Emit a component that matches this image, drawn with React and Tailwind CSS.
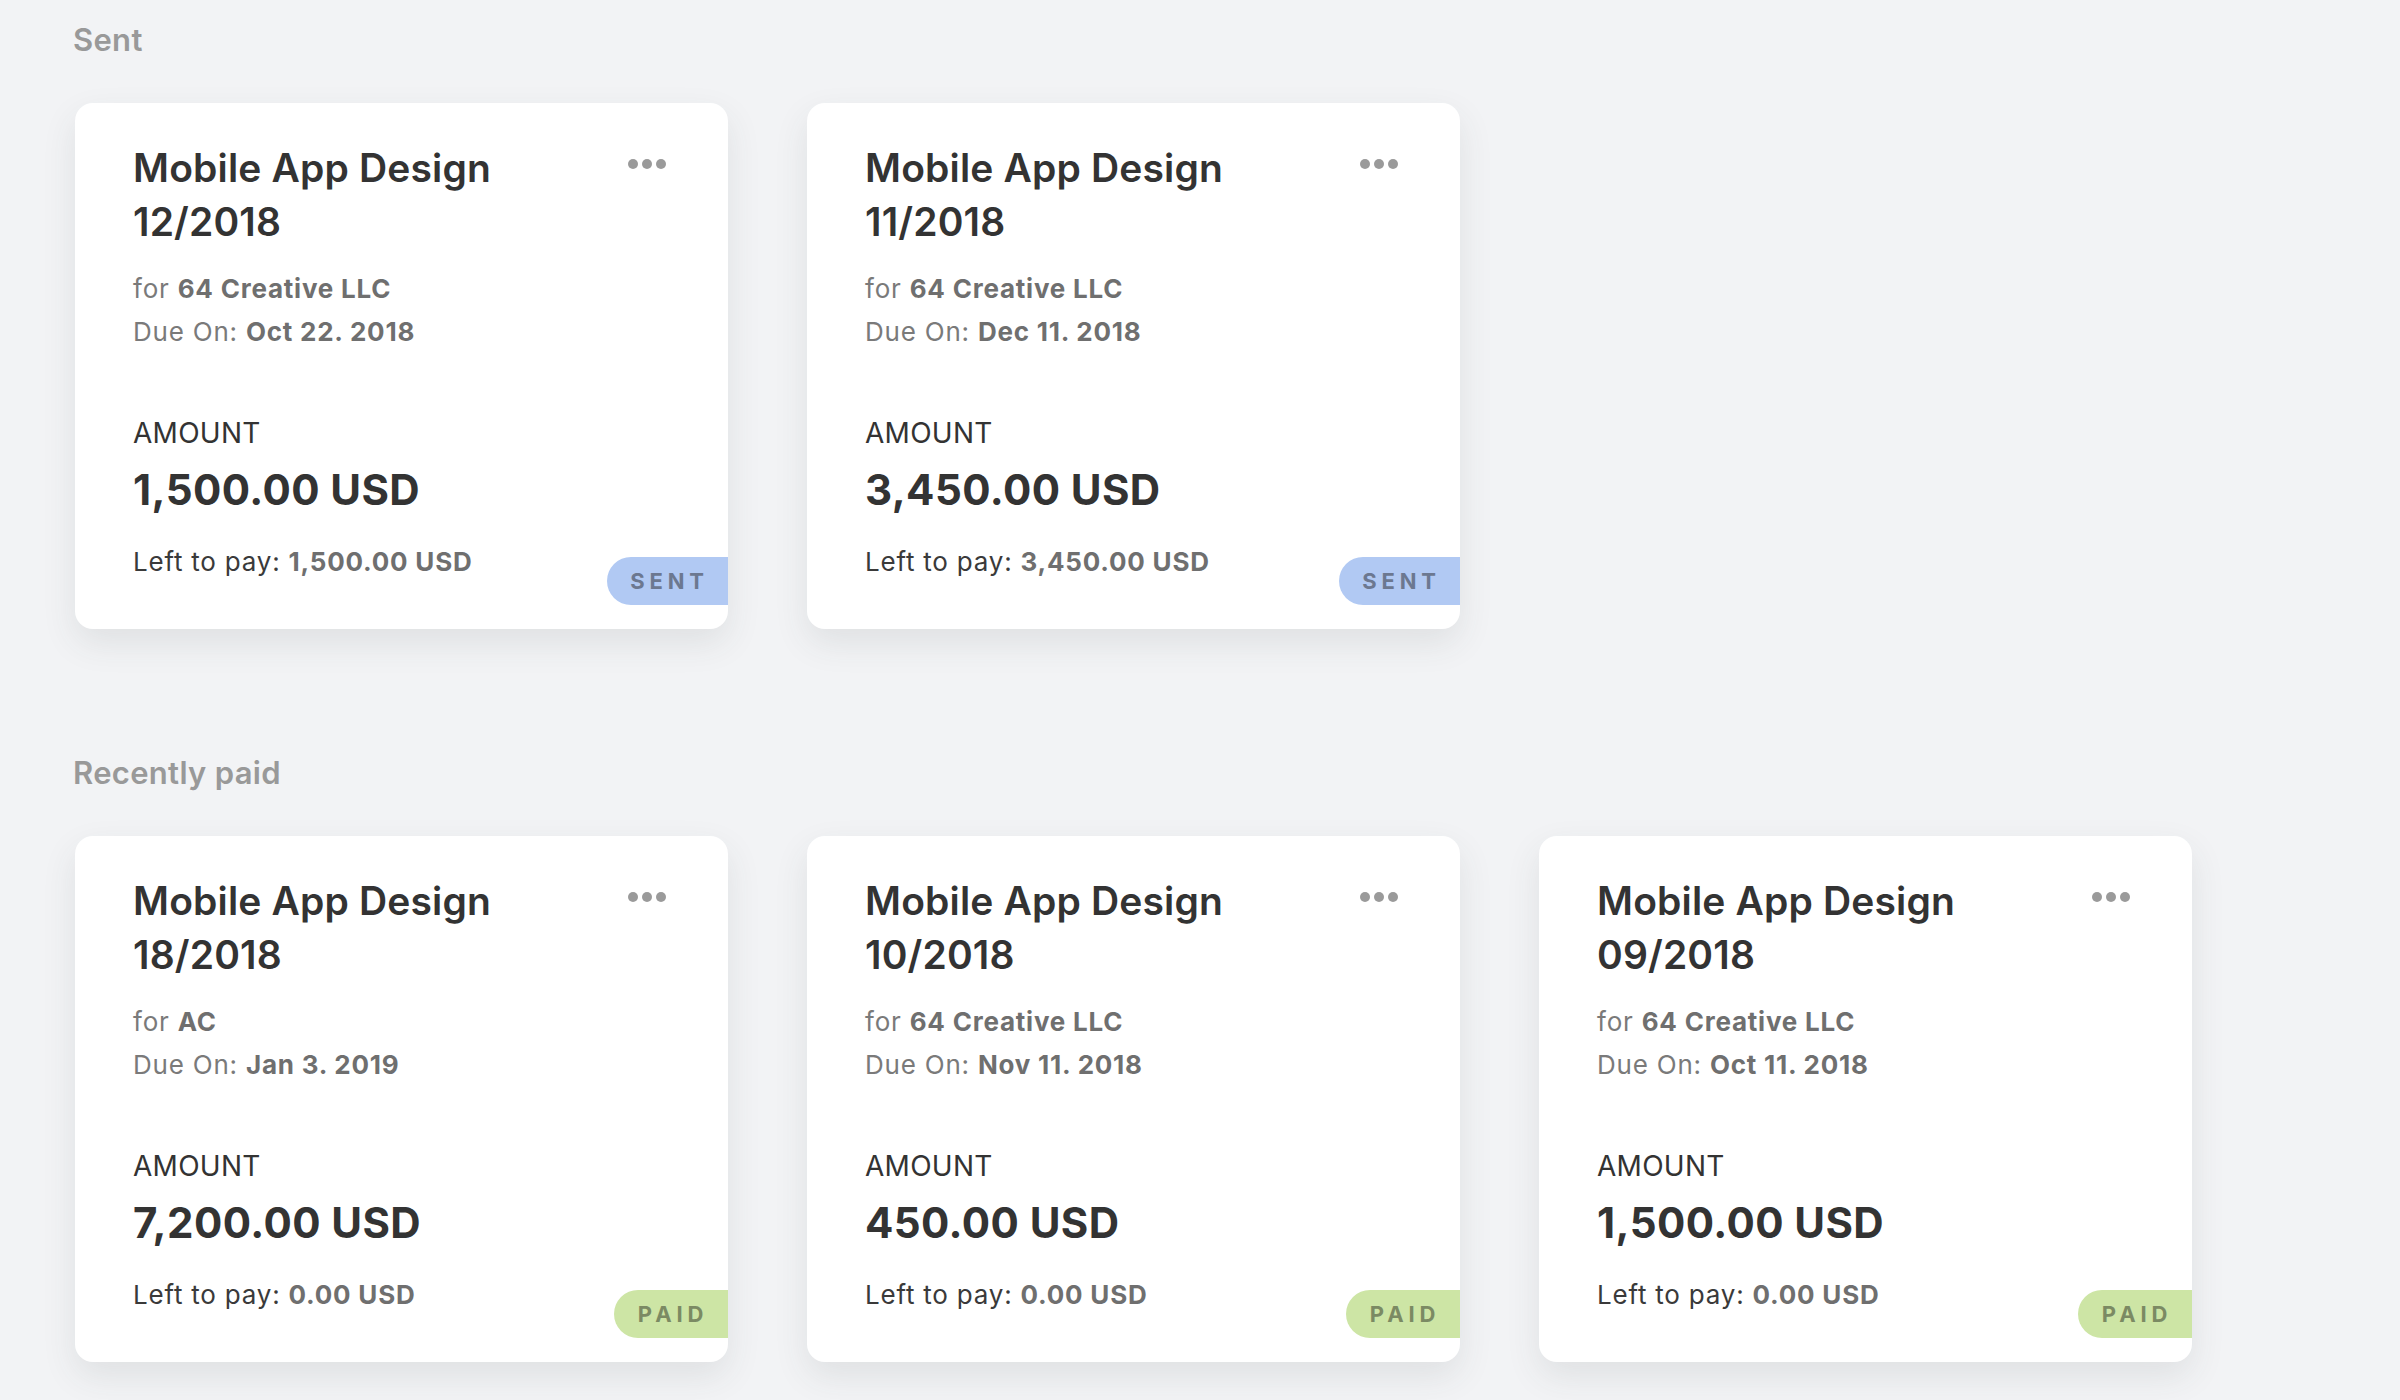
const SENT = [
  { title: "Mobile App Design 12/2018", client: "64 Creative LLC", due: "Oct 22. 2018", amount: "1,500.00 USD", left: "1,500.00 USD" },
  { title: "Mobile App Design 11/2018", client: "64 Creative LLC", due: "Dec 11. 2018", amount: "3,450.00 USD", left: "3,450.00 USD" },
];

const PAID = [
  { title: "Mobile App Design 18/2018", client: "AC", due: "Jan 3. 2019", amount: "7,200.00 USD", left: "0.00 USD" },
  { title: "Mobile App Design 10/2018", client: "64 Creative LLC", due: "Nov 11. 2018", amount: "450.00 USD", left: "0.00 USD" },
  { title: "Mobile App Design 09/2018", client: "64 Creative LLC", due: "Oct 11. 2018", amount: "1,500.00 USD", left: "0.00 USD" },
];

function Dots() {
  return (
    <svg width="42" height="12" viewBox="0 0 42 12" className="shrink-0" aria-hidden="true">
      <circle cx="6" cy="6" r="5" fill="#9a9a9a" />
      <circle cx="20" cy="6" r="5" fill="#9a9a9a" />
      <circle cx="34" cy="6" r="5" fill="#9a9a9a" />
    </svg>
  );
}

function Badge({ status }) {
  if (status === "sent") {
    return (
      <div className="absolute right-0 bottom-[24px] flex h-[48px] w-[121px] items-center justify-center rounded-l-full bg-[#b1c9f3] pl-[4px] text-[22px] font-bold tracking-[0.22em] text-[#6c7890]">
        SENT
      </div>
    );
  }
  return (
    <div className="absolute right-0 bottom-[24px] flex h-[48px] w-[114px] items-center justify-center rounded-l-full bg-[#cde5a5] pl-[4px] text-[22px] font-bold tracking-[0.22em] text-[#7b8a63]">
      PAID
    </div>
  );
}

function InvoiceCard({ inv, status }) {
  const num = inv.title.split(" ").pop();
  const name = inv.title.slice(0, inv.title.length - num.length - 1);
  return (
    <div className="relative w-[653px] overflow-hidden rounded-[18px] bg-white px-[58px] pt-[38px] pb-[47px] shadow-[0_14px_34px_rgba(60,64,72,0.10)]">
      <div className="flex items-start justify-between">
        <h3 className="text-[39px] font-semibold leading-[54px] tracking-[0.004em] text-[#333333]">
          {name}
          <br />
          {num}
        </h3>
        <div className="mt-[17px] mr-[1px]">
          <Dots />
        </div>
      </div>
      <p className="mt-[18px] text-[26px] leading-[43px] tracking-[0.03em] text-[#7a7a7a]">
        for <span className="font-bold text-[#6f6f6f]">{inv.client}</span>
      </p>
      <p className="text-[26px] leading-[43px] tracking-[0.03em] text-[#7a7a7a]">
        Due On: <span className="font-bold text-[#6f6f6f]">{inv.due}</span>
      </p>
      <p className="mt-[60px] text-[28px] leading-[40px] tracking-[0.01em] text-[#333333]">AMOUNT</p>
      <p className="mt-[11px] text-[42px] font-bold leading-[52px] tracking-[0.01em] text-[#333333]">{inv.amount}</p>
      <p className="mt-[26px] text-[26px] leading-[40px] tracking-[0.03em] text-[#3a3a3a]">
        Left to pay: <span className="font-bold text-[#6f6f6f]">{inv.left}</span>
      </p>
      <Badge status={status} />
    </div>
  );
}

function Section({ title, items, status, className = "" }) {
  return (
    <section className={className}>
      <h2 className="ml-[-2px] text-[31px] font-semibold leading-[40px] tracking-[0.01em] text-[#999999]">{title}</h2>
      <div className="mt-[43px] grid grid-cols-[repeat(3,653px)] gap-x-[79px]">
        {items.map((inv) => (
          <InvoiceCard key={inv.title} inv={inv} status={status} />
        ))}
      </div>
    </section>
  );
}

export default function App() {
  return (
    <div
      className="min-h-[1400px] w-full bg-[#f2f3f5] pt-[20px] pl-[75px]"
      style={{ fontFamily: "Inter, 'Noto Sans', sans-serif" }}
    >
      <Section title="Sent" items={SENT} status="sent" />
      <Section title="Recently paid" items={PAID} status="paid" className="mt-[124px]" />
    </div>
  );
}
